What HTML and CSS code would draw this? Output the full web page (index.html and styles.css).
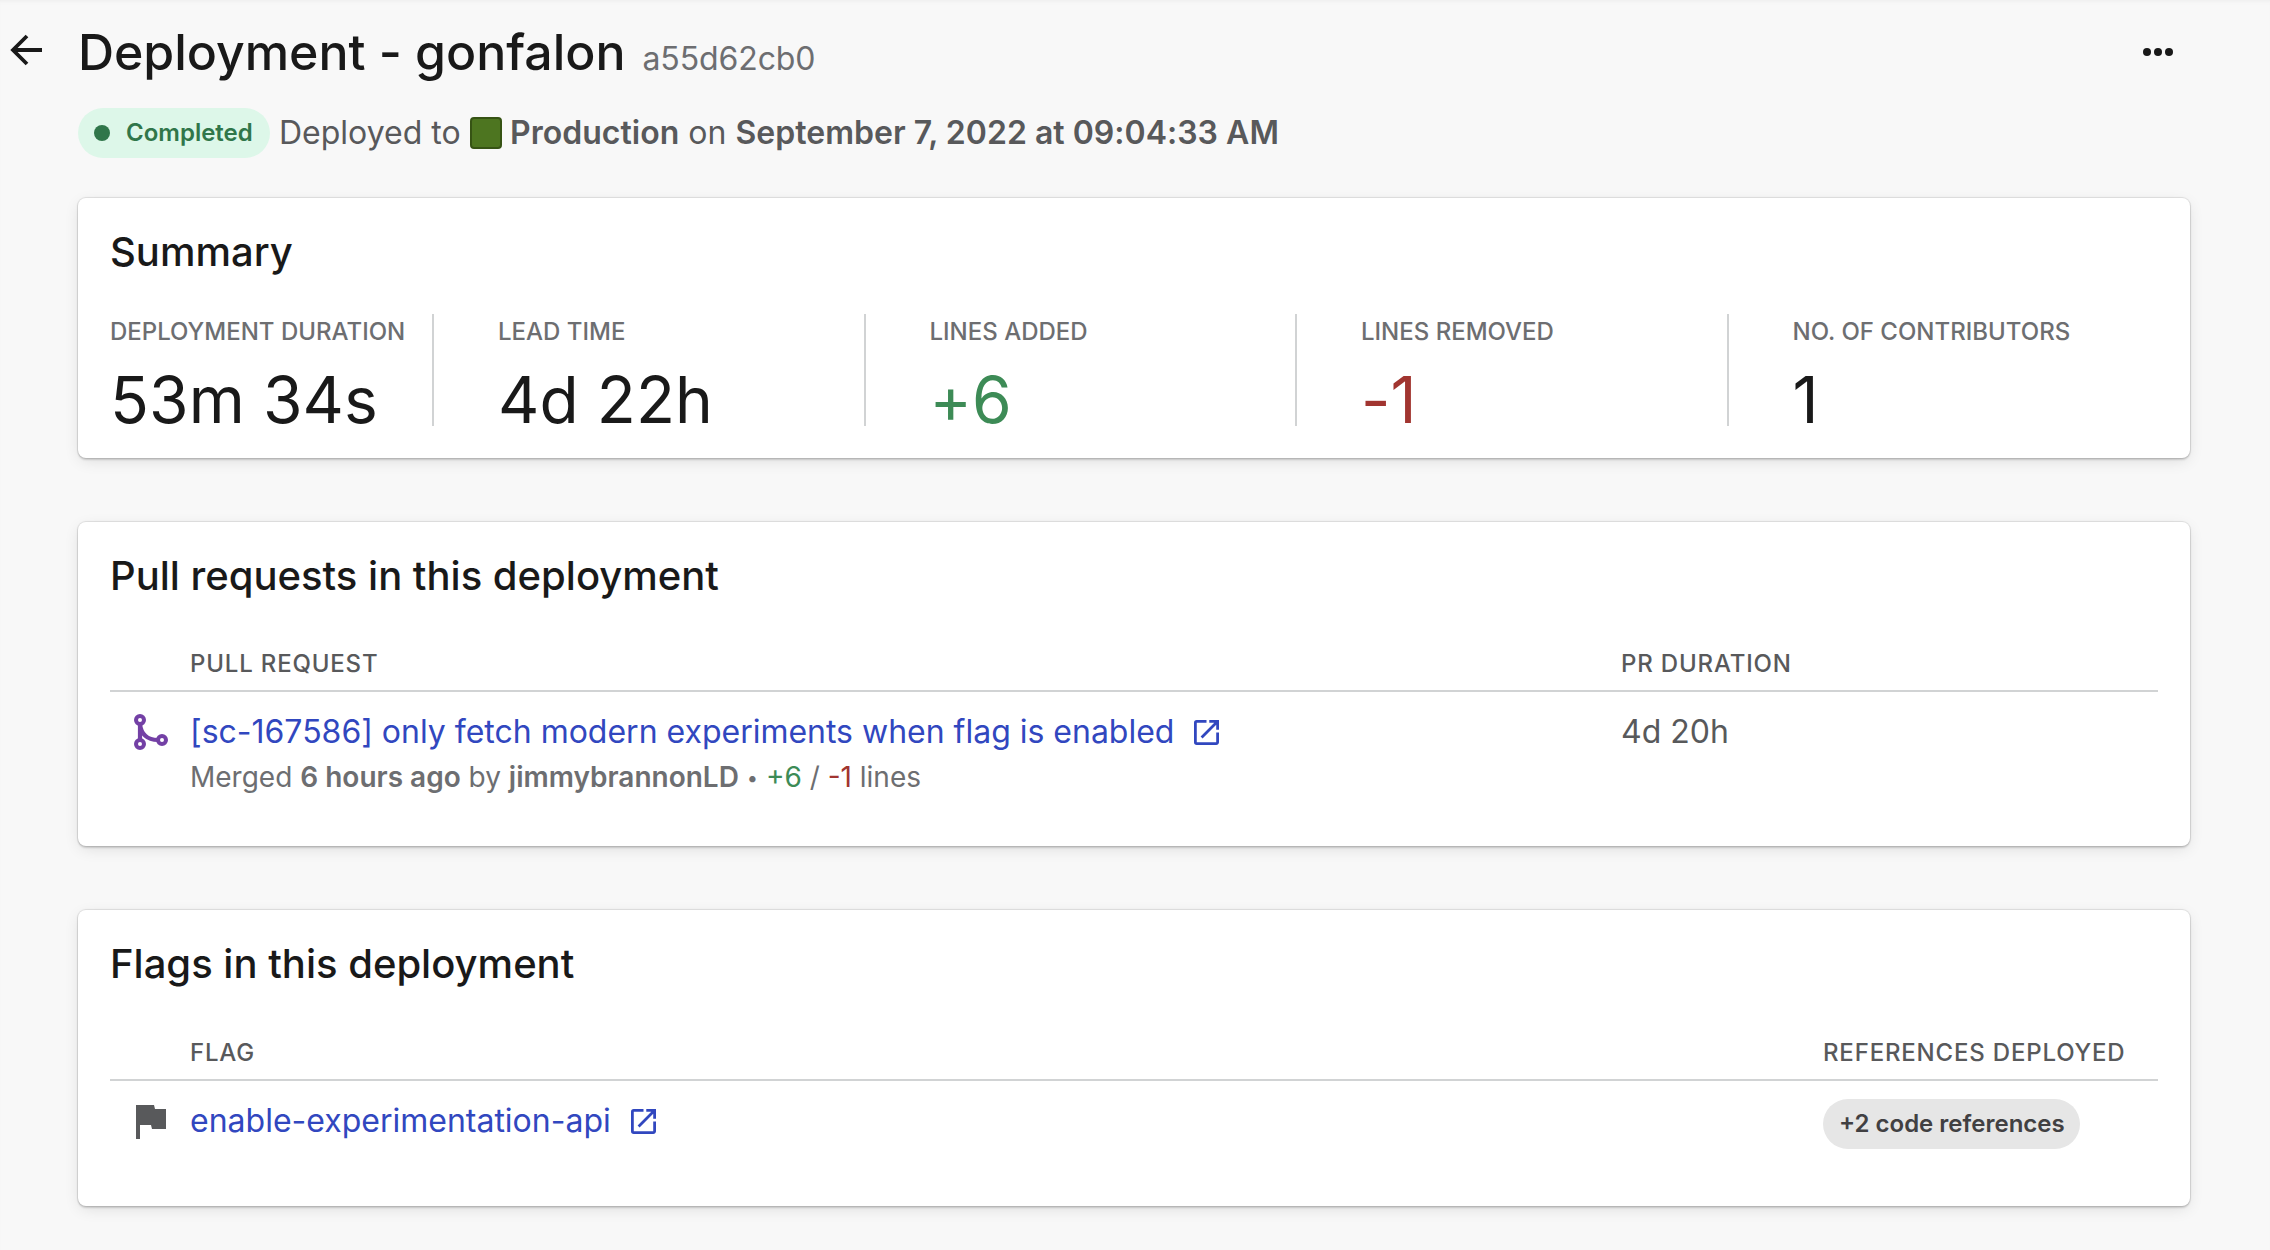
FILE: index.html
```html
<!DOCTYPE html>
<html lang="en">
<head>
<meta charset="utf-8">
<title>Deployment - gonfalon</title>
<link rel="stylesheet" href="styles.css">
</head>
<body>
<main class="page">
  <header class="header">
    <a class="back" href="#" aria-label="Back">
      <svg width="32" height="32" viewBox="0 0 32 32" fill="none" stroke="currentColor" stroke-width="3.8"><path d="M32 16H3M17 2 3 16l14 14"/></svg>
    </a>
    <div class="headline">
      <h1 class="title">Deployment - gonfalon</h1>
      <span class="hash">a55d62cb0</span>
    </div>
    <button class="more" type="button" aria-label="More actions">
      <svg width="32" height="10" viewBox="0 0 32 10" fill="currentColor"><circle cx="5" cy="5" r="4"/><circle cx="16" cy="5" r="4"/><circle cx="27" cy="5" r="4"/></svg>
    </button>
  </header>

  <div class="status">
    <span class="badge badge-success"><span class="dot"></span>Completed</span>
    <span class="text-deployed">Deployed to</span>
    <span class="swatch"></span>
    <span class="text-env"><b>Production</b> on <b>September 7, 2022 at 09:04:33 AM</b></span>
  </div>

  <section class="card card-summary">
    <h2 class="card-title">Summary</h2>
    <dl class="metrics">
      <div class="metric"><dt>DEPLOYMENT DURATION</dt><dd>53m 34s</dd></div>
      <div class="metric"><dt>LEAD TIME</dt><dd>4d 22h</dd></div>
      <div class="metric"><dt>LINES ADDED</dt><dd class="added">+6</dd></div>
      <div class="metric"><dt>LINES REMOVED</dt><dd class="removed">-1</dd></div>
      <div class="metric"><dt>NO. OF CONTRIBUTORS</dt><dd>1</dd></div>
    </dl>
  </section>

  <section class="card card-pulls">
    <h2 class="card-title">Pull requests in this deployment</h2>
    <div class="row row-head pulls-grid"><span></span><span>PULL REQUEST</span><span>PR DURATION</span></div>
    <div class="row pulls-grid">
      <svg class="row-icon merge" width="36" height="36" viewBox="0 0 36 36" fill="none" stroke="currentColor"><g stroke-width="4"><circle cx="7" cy="6" r="4"/><circle cx="7" cy="30" r="4"/><circle cx="29" cy="26" r="4"/></g><path stroke-width="4.200" d="M7 10v16M7 10c1 10 7 16 18 16"/></svg>
      <div>
        <a class="link" href="#"><span class="link-pull">[sc-167586] only fetch modern experiments when flag is enabled</span>
          <svg class="external" width="25" height="25" viewBox="3 3 18 18" fill="currentColor"><path d="M19 19H5V5h7V3H5a2 2 0 0 0-2 2v14a2 2 0 0 0 2 2h14c1.1 0 2-.9 2-2v-7h-2v7zM14 3v2h3.59l-9.83 9.83 1.41 1.41L19 6.41V10h2V3h-7z"/></svg></a>
        <p class="meta">Merged <b>6 hours ago</b> by <b>jimmybrannonLD</b> <span class="bullet">•</span> <span class="added">+6</span> / <span class="removed">-1</span> lines</p>
      </div>
      <span class="duration">4d 20h</span>
    </div>
  </section>

  <section class="card card-flags">
    <h2 class="card-title">Flags in this deployment</h2>
    <div class="row row-head flags-grid"><span></span><span>FLAG</span><span>REFERENCES DEPLOYED</span></div>
    <div class="row flags-grid">
      <svg class="row-icon flag" width="30" height="34" viewBox="0 0 30 34" fill="currentColor"><path d="M0 0h18l1 4h11v20H16l-1-4H4v14H0z"/></svg>
      <a class="link" href="#"><span class="link-flag">enable-experimentation-api</span>
        <svg class="external" width="25" height="25" viewBox="3 3 18 18" fill="currentColor"><path d="M19 19H5V5h7V3H5a2 2 0 0 0-2 2v14a2 2 0 0 0 2 2h14c1.1 0 2-.9 2-2v-7h-2v7zM14 3v2h3.59l-9.83 9.83 1.41 1.41L19 6.41V10h2V3h-7z"/></svg></a>
      <span><span class="badge badge-neutral">+2 code references</span></span>
    </div>
  </section>
</main>
</body>
</html>
```

FILE: styles.css
```css
* { box-sizing: border-box; margin: 0; padding: 0; }

body {
  min-height: 1250px;
  background: #f8f8f8;
  box-shadow: inset 0 4px 4px -3px #ececec;
  color: #191919;
  font-family: Inter, "Liberation Sans", sans-serif;
  font-size: 32px;
}

b { font-weight: 600; }
svg { display: block; flex: none; }

.page { padding: 0 80px 0 78px; }

.header { display: flex; height: 108px; margin-left: -68px; }
.back { width: 68px; padding-top: 34px; color: #191919; }
.headline { display: flex; flex: 1; align-items: baseline; gap: 17px; }
.title { font-size: 50px; font-weight: 500; line-height: 104px; letter-spacing: -.04px; white-space: nowrap; }
.hash { color: #6d6e71; letter-spacing: -.1px; }
.more { align-self: flex-start; margin: 47px 16px 0 0; border: 0; background: none; color: #191919; }

.status { display: flex; align-items: center; height: 50px; color: #58595b; line-height: 50px; white-space: nowrap; }
.text-deployed { width: 191px; }
.swatch { width: 32px; height: 32px; margin-right: 8px; border: 2px solid #365314; border-radius: 4px; background: #4d7520; }
.text-env { letter-spacing: .02px; }

.badge { display: inline-flex; align-items: center; height: 50px; border-radius: 25px; font-size: 24px; font-weight: 600; line-height: 50px; white-space: nowrap; }
.badge-success { width: 192px; margin-right: 9px; padding-left: 16px; background: #ddf7e9; color: #30764a; }
.badge-neutral { width: 257px; margin-top: 18px; padding-left: 16px; background: #e6e6e6; color: #414042; }
.dot { width: 16px; height: 16px; margin-right: 16px; border-radius: 50%; background: #30764a; }

.card {
  padding: 32px 32px 0;
  border-radius: 8px;
  background: #fff;
  box-shadow: 0 0 1px 1px rgba(0, 0, 0, .1), 0 2px 2px rgba(0, 0, 0, .14), 0 4px 16px -2px rgba(0, 0, 0, .12);
}
.card-summary { height: 260px; margin-top: 40px; }
.card-pulls { height: 324px; margin-top: 64px; }
.card-flags { height: 296px; margin-top: 64px; }
.card-title { height: 44px; font-size: 40px; font-weight: 500; line-height: 44px; white-space: nowrap; }

.metrics { display: grid; grid-template-columns: 322px repeat(4, 1fr); height: 112px; margin-top: 40px; }
.metric + .metric { padding-left: 64px; border-left: 2px solid #d1d3d4; }
.metric dt { color: #6d6e71; font-size: 24px; font-weight: 500; line-height: 36px; white-space: nowrap; }
.metric dd { margin-top: 24px; font-size: 64px; line-height: 52px; letter-spacing: .1px; white-space: nowrap; }
.added { color: #3d8b56; }
.removed { color: #a13530; }

.row { display: grid; align-items: start; }
.pulls-grid { grid-template-columns: 80px 1431px 1fr; }
.flags-grid { grid-template-columns: 80px 1633px 1fr; }
.row-head { height: 62px; margin-top: 32px; padding-top: 14px; border-bottom: 2px solid #d1d3d4; color: #58595b; font-size: 24px; font-weight: 500; line-height: 40px; letter-spacing: .82px; }
.row-head.flags-grid { height: 63px; padding-top: 15px; }
.row-icon { margin: 22px 0 0 23px; }
.merge { color: #7340a5; }
.flag { margin: 24px 0 0 26px; color: #58595b; }
.link { display: flex; align-items: center; gap: 20px; padding-top: 16px; color: #3147bf; line-height: 48px; text-decoration: none; white-space: nowrap; }
.link-pull { letter-spacing: -.01px; }
.meta { margin-top: 1px; color: #6d6e71; font-size: 28px; line-height: 40px; white-space: nowrap; }
.bullet { font-size: 20px; line-height: 1; vertical-align: 2px; }
.duration { padding-top: 16px; color: #58595b; line-height: 48px; }
```
